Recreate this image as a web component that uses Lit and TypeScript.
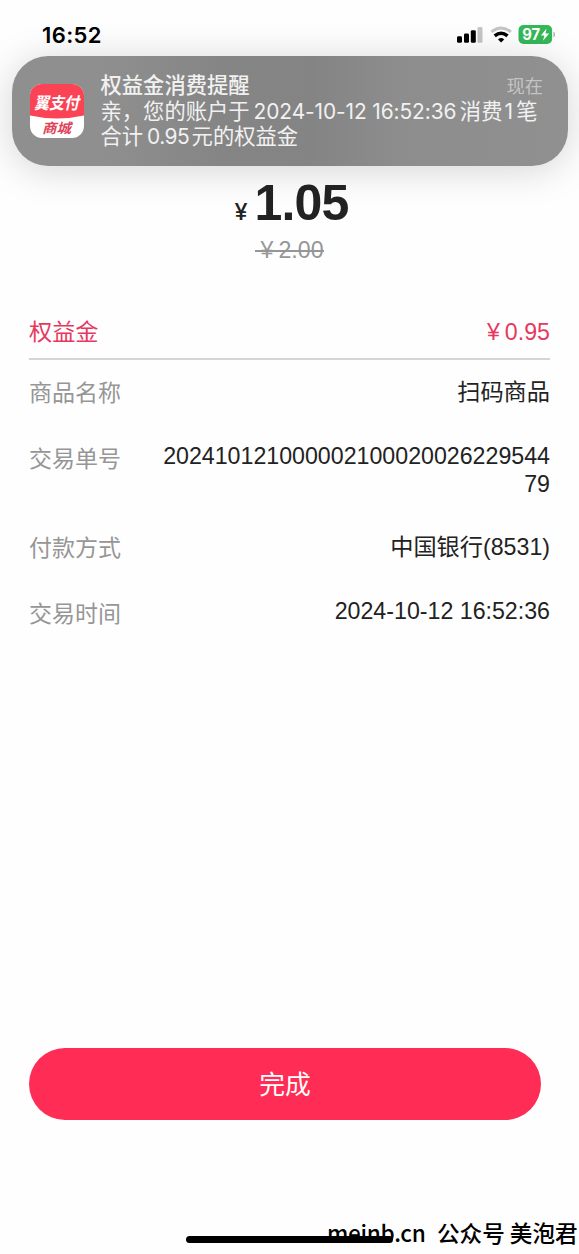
import { LitElement, html, css } from "lit";
import { customElement, property } from "lit/decorators.js";

@customElement("status-bar")
class StatusBar extends LitElement {
  static styles = css`
    :host { display: flex; height: 56px; box-sizing: border-box; padding: 14px 24.5px 0 42px; justify-content: space-between; align-items: flex-start; }
    .time { font: 600 22px/42px Inter, sans-serif; color: #000; letter-spacing: 0.4px; height: 42px; }
    svg { display: block; margin-top: 11px; }
    .level { font: 700 15.5px Inter, sans-serif; fill: #fff; }
  `;
  render() {
    return html`
      <div class="time">16:52</div>
      <svg width="99" height="20" viewBox="0 0 99 20">
        <rect x="1" y="11.3" width="5" height="6.5" rx="1.4" fill="#000" />
        <rect x="8" y="8.6" width="5" height="9.2" rx="1.4" fill="#000" />
        <rect x="14.8" y="5.2" width="5" height="12.6" rx="1.4" fill="#000" />
        <rect x="21.5" y="2" width="5" height="15.8" rx="1.4" fill="#c5c5c6" />
        <path d="M35.3 6.9 Q45.1 -0.9 54.9 6.9" fill="none" stroke="#c5c5c6" stroke-width="3" />
        <path d="M38.7 10.9 Q45.1 5.4 51.5 10.9" fill="none" stroke="#000" stroke-width="3.4" />
        <path d="M42 14.4 Q45.1 11.6 48.2 14.4 L45.1 17.6Z" fill="#000" />
        <rect x="62.5" y="0" width="33.6" height="19" rx="5" fill="#34b858" />
        <path d="M97.4 6.8 a3 3 0 0 1 0 5.6Z" fill="#b5b5b7" />
        <text class="level" x="66.2" y="15.2" textLength="18" lengthAdjust="spacingAndGlyphs">97</text>
        <path d="M90.6 3.6 L84.9 10.4 H88.3 L87 15.8 L93.2 8.5 H89.5Z" fill="#fff" />
      </svg>
    `;
  }
}

@customElement("push-banner")
class PushBanner extends LitElement {
  static styles = css`
    :host {
      display: flex; box-sizing: border-box; height: 110px; margin: 0 11px 0 11.5px; padding: 17px 25px 0 19px; gap: 17px;
      border-radius: 36px; color: #f1f1f1;
      background: linear-gradient(90deg, #8f8f8f 0%, #8f8f8f 16%, #858585 38%, #848484 54%, #8d8d8d 70%, #909090 100%);
      box-shadow: 0 4px 38px rgba(0, 0, 0, 0.17);
      font: 21.3px/25px Inter, "Noto Sans CJK SC", sans-serif;
    }
    .icon { display: block; flex: none; margin: 11px 0 0 -0.5px; }
    .brand { font: italic 700 16.5px "Noto Sans CJK SC", sans-serif; fill: #fff; }
    .mall { font: italic 700 13.5px "Noto Sans CJK SC", sans-serif; fill: #e04359; }
    .copy { flex: 1; margin-left: -0.5px; white-space: nowrap; }
    .head { display: flex; justify-content: space-between; }
    .title { font-weight: 500; }
    .when { font-size: 18.3px; color: #c4c4c4; padding-top: 1px; }
    .num { margin: 0 3.5px 0 4px; font-size: 20.9px; letter-spacing: -0.1px; }
    .tight { letter-spacing: -0.55px; margin-right: 2.5px; }
    .one { margin: 0 3.5px 0 2px; }
  `;
  render() {
    return html`
      <svg class="icon" width="54" height="54" viewBox="0 0 54 54">
        <defs><clipPath id="tile"><rect width="54" height="54" rx="12" /></clipPath></defs>
        <g clip-path="url(#tile)">
          <rect width="54" height="54" fill="#fff" />
          <path d="M0 0 H54 V31.5 Q27 37.5 0 31.5Z" fill="#fa4455" />
        </g>
        <text class="brand" x="4" y="25" textLength="45" lengthAdjust="spacingAndGlyphs">翼支付</text>
        <text class="mall" x="12" y="48.5" textLength="29" lengthAdjust="spacingAndGlyphs">商城</text>
      </svg>
      <div class="copy">
        <div class="head"><span class="title">权益金消费提醒</span><span class="when">现在</span></div>
        <div>亲，您的账户于<span class="num">2024-10-12 16:52:36</span>消费<span class="num one">1</span>笔</div>
        <div>合计<span class="num tight">0.95</span>元的权益金</div>
      </div>
    `;
  }
}

@customElement("detail-row")
class DetailRow extends LitElement {
  @property() label = "";
  @property() value = "";
  @property({ type: Boolean, reflect: true }) tall = false;
  static styles = css`
    :host { display: flex; justify-content: space-between; align-items: flex-start; font-size: 23.2px; color: #222; }
    .label { color: #969696; font-size: 23px; height: 32px; line-height: 34px; }
    .value { width: 388px; text-align: right; overflow-wrap: anywhere; line-height: 28px; }
    :host([tall]) .value { line-height: 32px; }
  `;
  render() {
    return html`<div class="label">${this.label}</div><div class="value">${this.value}</div>`;
  }
}

@customElement("app-root")
class AppRoot extends LitElement {
  static styles = css`
    :host {
      display: flex; flex-direction: column; position: relative; box-sizing: border-box; height: 1254px; overflow: hidden;
      background: #fefefe; font-family: "Liberation Sans", "Noto Sans CJK SC", sans-serif;
    }
    .price { display: flex; justify-content: center; align-items: baseline; gap: 7px; margin-top: 9px; padding-left: 4px; height: 56px; line-height: 56px; color: #222; }
    .sign { font-size: 23.5px; font-weight: 500; font-family: Inter, sans-serif; }
    .sum { font-size: 50px; font-weight: 700; letter-spacing: -0.8px; }
    .was {
      align-self: center; font-size: 23.2px; line-height: 28px; color: #969696; margin-top: 5px;
      background: linear-gradient(#969696, #969696) 0 14px / 100% 2px no-repeat;
    }
    .yen { display: inline-block; width: 23px; text-align: center; }
    .benefit {
      display: flex; justify-content: space-between; margin: 54px 29px 0; padding-bottom: 12px; height: 28px; line-height: 28px;
      border-bottom: 2px solid #d5d5d5; color: #e6395f; font-size: 23.2px;
    }
    .rows { display: flex; flex-direction: column; gap: 33.5px; padding: 16px 29px 0; }
    .done {
      margin: auto 38px 134px 29px; height: 72px; border: 0; border-radius: 36px; background: #ff2d55; color: #fff;
      font: 25.8px/70px "Noto Sans CJK SC", sans-serif; padding: 0 0 2px; flex: none;
    }
    .mark { position: absolute; left: 327px; top: 1218px; display: flex; gap: 11.5px; font: 500 22.6px/30px "Noto Sans CJK SC", sans-serif; color: #000; white-space: nowrap; }
    .site { letter-spacing: -0.3px; }
    .home { position: absolute; left: 186px; top: 1235.5px; width: 207px; height: 7px; border-radius: 4px; background: #000; }
  `;
  render() {
    return html`
      <status-bar></status-bar>
      <push-banner></push-banner>
      <div class="price"><span class="sign">¥</span><span class="sum">1.05</span></div>
      <div class="was"><span class="yen">¥</span>2.00</div>
      <div class="benefit"><span>权益金</span><span><span class="yen">¥</span>0.95</span></div>
      <div class="rows">
        <detail-row tall label="商品名称" value="扫码商品"></detail-row>
        <detail-row label="交易单号" value="20241012100000210002002622954479"></detail-row>
        <detail-row tall label="付款方式" value="中国银行(8531)"></detail-row>
        <detail-row label="交易时间" value="2024-10-12 16:52:36"></detail-row>
      </div>
      <button class="done">完成</button>
      <div class="mark"><span class="site">meinb.cn</span><span>公众号 美泡君</span></div>
      <div class="home"></div>
    `;
  }
}
